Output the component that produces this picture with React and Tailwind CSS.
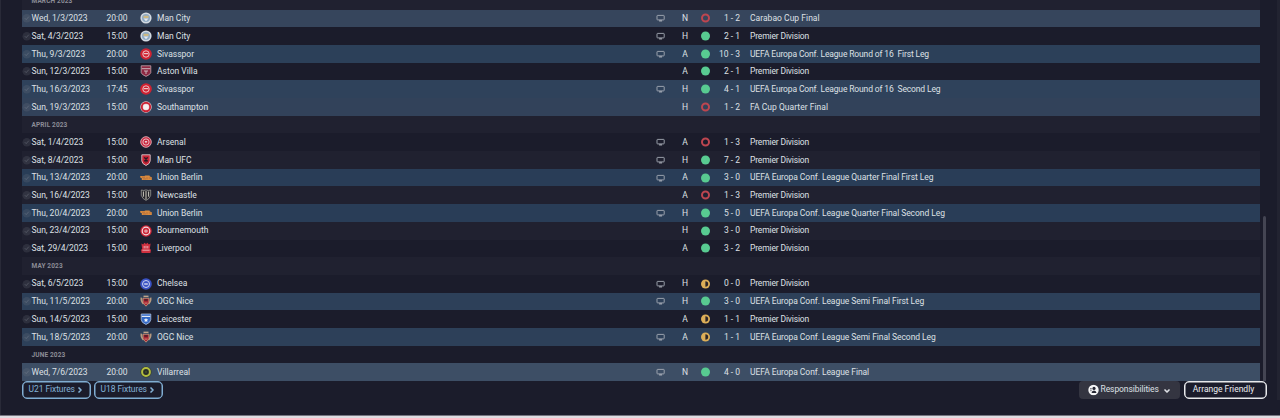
import React from "react";
import { ChevronDown, ChevronRight } from "lucide-react";

const fixtures = [
  { month: "MARCH 2023" },
  { date: "Wed, 1/3/2023", time: "20:00", team: "Man City", tv: true, venue: "N", result: "loss", score: "1 - 2", comp: "Carabao Cup Final", bg: "bg-[#36455c]" },
  { date: "Sat, 4/3/2023", time: "15:00", team: "Man City", tv: true, venue: "H", result: "win", score: "2 - 1", comp: "Premier Division" },
  { date: "Thu, 9/3/2023", time: "20:00", team: "Sivasspor", tv: true, venue: "A", result: "win", score: "10 - 3", comp: "UEFA Europa Conf. League Round of 16  First Leg", bg: "bg-[#2c4059]" },
  { date: "Sun, 12/3/2023", time: "15:00", team: "Aston Villa", venue: "A", result: "win", score: "2 - 1", comp: "Premier Division" },
  { date: "Thu, 16/3/2023", time: "17:45", team: "Sivasspor", tv: true, venue: "H", result: "win", score: "4 - 1", comp: "UEFA Europa Conf. League Round of 16  Second Leg", bg: "bg-[#2f425b]" },
  { date: "Sun, 19/3/2023", time: "15:00", team: "Southampton", venue: "H", result: "loss", score: "1 - 2", comp: "FA Cup Quarter Final", bg: "bg-[#32425a]" },
  { month: "APRIL 2023" },
  { date: "Sat, 1/4/2023", time: "15:00", team: "Arsenal", tv: true, venue: "A", result: "loss", score: "1 - 3", comp: "Premier Division" },
  { date: "Sat, 8/4/2023", time: "15:00", team: "Man UFC", tv: true, venue: "H", result: "win", score: "7 - 2", comp: "Premier Division" },
  { date: "Thu, 13/4/2023", time: "20:00", team: "Union Berlin", tv: true, venue: "A", result: "win", score: "3 - 0", comp: "UEFA Europa Conf. League Quarter Final First Leg", bg: "bg-[#293d57]" },
  { date: "Sun, 16/4/2023", time: "15:00", team: "Newcastle", venue: "A", result: "loss", score: "1 - 3", comp: "Premier Division" },
  { date: "Thu, 20/4/2023", time: "20:00", team: "Union Berlin", tv: true, venue: "H", result: "win", score: "5 - 0", comp: "UEFA Europa Conf. League Quarter Final Second Leg", bg: "bg-[#293d57]" },
  { date: "Sun, 23/4/2023", time: "15:00", team: "Bournemouth", venue: "H", result: "win", score: "3 - 0", comp: "Premier Division" },
  { date: "Sat, 29/4/2023", time: "15:00", team: "Liverpool", venue: "A", result: "win", score: "3 - 2", comp: "Premier Division" },
  { month: "MAY 2023" },
  { date: "Sat, 6/5/2023", time: "15:00", team: "Chelsea", tv: true, venue: "H", result: "draw", score: "0 - 0", comp: "Premier Division" },
  { date: "Thu, 11/5/2023", time: "20:00", team: "OGC Nice", tv: true, venue: "H", result: "win", score: "3 - 0", comp: "UEFA Europa Conf. League Semi Final First Leg", bg: "bg-[#2d4059]" },
  { date: "Sun, 14/5/2023", time: "15:00", team: "Leicester", venue: "A", result: "draw", score: "1 - 1", comp: "Premier Division" },
  { date: "Thu, 18/5/2023", time: "20:00", team: "OGC Nice", tv: true, venue: "A", result: "draw", score: "1 - 1", comp: "UEFA Europa Conf. League Semi Final Second Leg", bg: "bg-[#2d4059]" },
  { month: "JUNE 2023" },
  { date: "Wed, 7/6/2023", time: "20:00", team: "Villarreal", tv: true, venue: "N", result: "win", score: "4 - 0", comp: "UEFA Europa Conf. League Final", bg: "bg-[#3d4e65]" }
];

const shield = "M1.2 1H10.8V6.5Q10.8 9.5 6 11.5Q1.2 9.5 1.2 6.5Z";

const crests = {
  "Man City": (
    <>
      <circle cx="6" cy="6" r="5.6" fill="#d3dae2" />
      <circle cx="6" cy="6" r="4" fill="#8fabc5" />
      <path d="M3.5 3.8h5v2.2h-5z" fill="#cdb983" />
      <path d="M3.5 6.4h5L6 9.2z" fill="#e5e9ee" />
    </>
  ),
  Sivasspor: (
    <>
      <circle cx="6" cy="6" r="5.8" fill="#d02231" />
      <circle cx="6" cy="6" r="3.2" fill="none" stroke="#efd6da" strokeWidth=".9" />
      <path d="M3.8 5.7h4.4" stroke="#f4e6e7" strokeWidth="1" />
    </>
  ),
  "Aston Villa": (
    <>
      <path d="M1.2 .8H10.8V7.6Q10.4 9.6 6 11.4Q1.6 9.6 1.2 7.6Z" fill="#8e2841" stroke="#c4a8b0" strokeWidth=".8" />
      <path d="M1.8 3.7h8.4M4 6h4M6 6v3" stroke="#cbb5bb" strokeWidth="1" />
    </>
  ),
  Southampton: (
    <>
      <circle cx="6" cy="6" r="5.7" fill="#e9d5d9" />
      <circle cx="6" cy="6" r="4.2" fill="none" stroke="#cb2335" strokeWidth="1.9" />
      <circle cx="6" cy="6" r="2.6" fill="#f7eff1" />
    </>
  ),
  Arsenal: (
    <>
      <circle cx="6" cy="6" r="5.3" fill="#c92c43" stroke="#e3b2ba" strokeWidth=".9" />
      <circle cx="6" cy="6" r="3.1" fill="none" stroke="#efc6cc" strokeWidth=".9" />
      <path d="M4.6 4.9h2.8L6 7.6z" fill="#eacdd1" />
    </>
  ),
  "Man UFC": (
    <>
      <path d="M1.8 .8H10.2V6.8Q10.2 9.7 6 11.5Q1.8 9.7 1.8 6.8Z" fill="#c92436" stroke="#dac6ca" strokeWidth=".9" />
      <path d="M4.2 3.4l3.6 4M7.8 3.4l-3.6 4M6 3.5v5" stroke="#221923" strokeWidth="1.1" />
    </>
  ),
  "Union Berlin": (
    <>
      <path d="M.2 4.1h4.1l1.1-.5h4.1l.4.8 1.9.9V8H1.8V6.2L.2 5.6z" fill="#d98b3e" />
      <path d="M2 5.2h3M3 6.9h3M7 5.1v2.2M8.7 6h2" stroke="#a3633d" strokeWidth=".7" />
    </>
  ),
  Newcastle: (
    <>
      <path d="M1.3 1Q3.8 2 6 .9Q8.2 2 10.7 1V6.3Q9.8 9.8 6 11.4Q2.2 9.8 1.3 6.3Z" fill="#26262b" stroke="#a9aaa4" strokeWidth=".7" />
      <path d="M3.4 2.5v5.2M8.6 2.5v5.2M6 2v8.5" stroke="#cbc9bd" strokeWidth="1" />
    </>
  ),
  Bournemouth: (
    <>
      <circle cx="6" cy="6" r="5.7" fill="#ce2436" />
      <circle cx="6" cy="6" r="3.8" fill="none" stroke="#f0dfe2" strokeWidth="1.2" />
      <circle cx="6" cy="6" r="1.6" fill="#f0dfe2" />
      <circle cx="6" cy="6" r=".7" fill="#ce2436" />
    </>
  ),
  Liverpool: (
    <>
      <path d="M1.4 1.5l1.8 1 1.3-1.7L6 1.9l1.5-1.1 1.3 1.7 1.8-1L9.8 7l1.2.8-.6 3.1H1.6L1 7.8 2.2 7z" fill="#d0303f" />
      <path d="M4.2 4v2.4M6 3.8v2.6M7.8 4v2.4M2.4 8.2h7.2" stroke="#ecb9bd" strokeWidth=".9" />
    </>
  ),
  Chelsea: (
    <>
      <circle cx="6" cy="6" r="5.8" fill="#3a52c4" />
      <circle cx="6" cy="6" r="3.5" fill="none" stroke="#cbd2f0" strokeWidth="1" />
      <path d="M4.2 6h3.6" stroke="#e0e4f5" strokeWidth="1.3" />
    </>
  ),
  "OGC Nice": (
    <>
      <path d="M1.3 2.6q-.3 4.2 2.2 6.2M10.7 2.6q.3 4.2-2.2 6.2" stroke="#b89a7e" strokeWidth="1.6" fill="none" />
      <path d="M3 3.2h6v4.9L6 11.2 3 8.1z" fill="#a72332" stroke="#c9a283" strokeWidth=".8" />
      <path d="M3.5 1.3h5" stroke="#c9ab8f" strokeWidth="1.3" />
      <path d="M4.3 4.2h3.4v1.5H4.3z" fill="#4a1c29" />
      <path d="M4.4 8.1h3.2" stroke="#d9a28c" strokeWidth=".8" />
    </>
  ),
  Leicester: (
    <>
      <path d={shield} fill="#3268c6" stroke="#c2d1ea" strokeWidth=".7" />
      <path d="M1.8 3.4h8.4" stroke="#e1e8f4" strokeWidth="1.2" />
      <path d="M6 5l.7 1.3 1.5.2L7.1 7.5l.3 1.6L6 8.3l-1.4.8.3-1.6-1.1-1 1.5-.2z" fill="#f0f4fa" />
    </>
  ),
  Villarreal: (
    <>
      <circle cx="6" cy="6" r="5.6" fill="#343d30" />
      <circle cx="6" cy="6" r="3.9" fill="#282d29" stroke="#b3bd3f" strokeWidth="2" />
      <circle cx="6" cy="6" r="1.1" fill="#454e29" />
    </>
  )
};

function Crest({ team }) {
  return (
    <svg viewBox="0 0 12 12" className="h-3 w-3 shrink-0">
      {crests[team]}
    </svg>
  );
}

function PlayedIcon() {
  return (
    <svg viewBox="0 0 10 10" className="h-2.5 w-2.5 shrink-0">
      <circle cx="4.8" cy="5.2" r="4.3" fill="#777b88" fillOpacity=".2" />
      <path d="M2.8 5.2l1.4 1.4 2.6-2.9" fill="none" stroke="#8c929d" strokeOpacity=".4" strokeWidth=".9" />
    </svg>
  );
}

function TvIcon() {
  return (
    <svg viewBox="0 0 10 8" className="h-2 w-2.5">
      <rect x="1" y="1.4" width="7.2" height="4.5" rx=".6" fill="none" stroke="#a5abb5" strokeWidth=".9" />
      <path d="M3.1 6.9h3" stroke="#bfc3ca" strokeWidth="1" />
    </svg>
  );
}

function ResultIcon({ result }) {
  return (
    <svg viewBox="0 0 10 10" className="h-2.5 w-2.5">
      {result === "win" && <circle cx="4.5" cy="5" r="4.5" fill="#58cb91" />}
      {result === "loss" && <circle cx="4.5" cy="5" r="3.5" fill="none" stroke="#bd4650" strokeWidth="2" />}
      {result === "draw" && (
        <>
          <circle cx="4.5" cy="5" r="4.5" fill="#dcae58" />
          <path d="M4.4 2.2a2.8 2.8 0 0 1 0 5.6z" fill="#2a2427" />
        </>
      )}
    </svg>
  );
}

function FixtureRow({ item, index }) {
  const stripe = index % 2 ? "bg-[#202130]" : "bg-[#1b1c2b]";

  if (item.month) {
    return (
      <div className={`flex h-[17.7px] shrink-0 items-center pl-[9.5px] pt-px text-[6.5px] font-bold tracking-[0.13px] text-[#8b8c96] ${index === 0 || index === 7 || index === 15 ? "bg-[#202130]" : "bg-[#1b1c2b]"}`}>
        {item.month}
      </div>
    );
  }

  return (
    <div className={`flex h-[17.7px] shrink-0 items-center whitespace-pre ${item.bg || (index === 4 || index === 18 ? "bg-[#1b1c2b]" : stripe)}`}>
      <PlayedIcon />
      <span className="-ml-[0.5px] w-[72px] shrink-0 tracking-[-0.02px]">{item.date}</span>
      <span className="w-[27px] text-center">{item.time}</span>
      <span className="ml-[9.5px] flex w-[17px] shrink-0">
        <Crest team={item.team} />
      </span>
      <span className="w-[498px] shrink-0">{item.team}</span>
      <span className="flex w-3 justify-center">{item.tv && <TvIcon />}</span>
      <span className="ml-2.5 w-4 text-center">{item.venue}</span>
      <span className="ml-[7px] flex w-[11px] justify-center">
        <ResultIcon result={item.result} />
      </span>
      <span className="w-[29px] text-right">{item.score}</span>
      <span className={`ml-[10px] ${item.comp.includes("Round of") ? "tracking-[-0.14px]" : item.comp === "Premier Division" ? "tracking-[-0.15px]" : item.comp.includes("Cup") ? "tracking-[0.03px]" : "tracking-[-0.06px]"}`}>
        {item.comp}
      </span>
    </div>
  );
}

function SquadButton({ label, className }) {
  return (
    <button className={`flex h-[18px] items-center justify-center gap-px rounded-[5px] border-[1.5px] border-[#80add2] pb-px text-[#84b2d7] shadow-[inset_0_0_0_0.5px_#80add2] ${className}`}>
      <span className="tracking-[-0.08px]">{label}</span>
      <ChevronRight className="h-[9px] w-2 translate-y-[0.5px]" strokeWidth={5} />
    </button>
  );
}

export default function App() {
  return (
    <div className="flex h-[418px] w-[1280px] flex-col overflow-hidden bg-[#1b1c2b] font-['Roboto',sans-serif] text-[8.5px] leading-none text-[#dee0e5]">
      <main className="flex h-[415px] shrink-0 border-l border-[#292a38]">
        <div className="flex w-[1276px] flex-col">
          <div className="flex h-[381px] shrink-0 overflow-hidden pl-[21px]">
            <div className="flex h-[381px] w-[1238px] flex-col justify-end">
              {fixtures.map((item, index) => (
                <FixtureRow key={index} item={item} index={index} />
              ))}
            </div>
            <div className="mt-[216px] ml-[3px] w-[2.5px] rounded-t-full bg-[#444553]" />
          </div>

          <footer className="flex h-[18px] items-center pl-[20.5px] pr-[10px]">
            <SquadButton label="U21 Fixtures" className="w-[69.5px]" />
            <SquadButton label="U18 Fixtures" className="ml-[2.5px] w-[69.5px]" />
            <button className="ml-auto flex h-[18px] w-[101px] items-center rounded-[4px] bg-[#343541] pb-px pl-[8.5px]">
              <svg viewBox="0 0 11 11" className="mr-[2px] h-[11px] w-[11px] translate-y-[0.5px]">
                <circle cx="5.5" cy="5.5" r="5.2" fill="#f5f5f6" />
                <circle cx="6" cy="3.9" r="1.6" fill="#262733" />
                <path d="M3.5 8.5q.2-2.5 2.5-2.5t2.5 2.5z" fill="#262733" />
                <path d="M2 4.3h1.8M2.3 6.2h1.3" stroke="#262733" strokeWidth=".8" />
              </svg>
              <span className="tracking-[-0.08px]">Responsibilities</span>
              <ChevronDown className="ml-1 h-2 w-2 translate-y-px" strokeWidth={5} />
            </button>
            <button className="ml-[4px] h-[18px] w-[83px] rounded-[5px] border-[1.5px] border-[#e8e9ec] pb-px pr-1 text-[#eeeff2] shadow-[inset_0_0_0_0.5px_#e8e9ec]">
              Arrange Friendly
            </button>
          </footer>
        </div>
        <div className="h-[400px] w-[3px] bg-[#222331]" />
      </main>
      <div className="h-[3px] shrink-0 border-t border-[#777681] bg-[#dedce1]" />
    </div>
  );
}
